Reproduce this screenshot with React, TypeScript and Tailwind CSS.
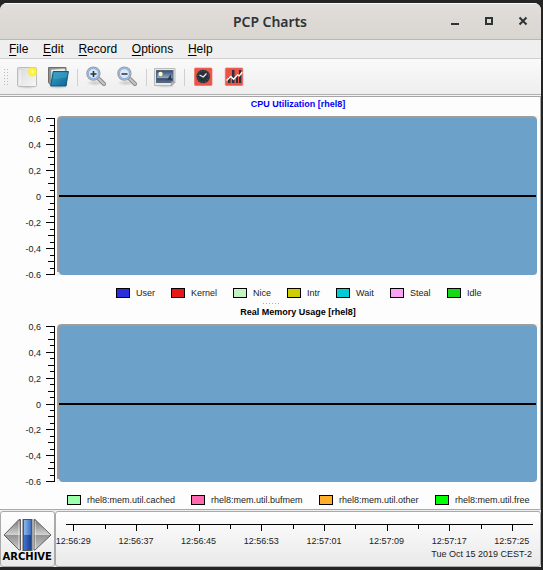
import React from "react";

type Item = { label: string; color: string; width: string };

const cpu: Item[] = [
  { label: "User", color: "bg-[#2d2de0]", width: "w-[55px]" },
  { label: "Kernel", color: "bg-[#e81717]", width: "w-[62px]" },
  { label: "Nice", color: "bg-[#c2f3c2]", width: "w-[54px]" },
  { label: "Intr", color: "bg-[#cdcd00]", width: "w-[49px]" },
  { label: "Wait", color: "bg-[#00cdd1]", width: "w-[54px]" },
  { label: "Steal", color: "bg-[#fba2f5]", width: "w-[57px]" },
  { label: "Idle", color: "bg-[#16d816]", width: "w-[50px]" },
];

const memory: Item[] = [
  { label: "rhel8:mem.util.cached", color: "bg-[#9cffab]", width: "w-[124px]" },
  { label: "rhel8:mem.util.bufmem", color: "bg-[#ff69ad]", width: "w-[128px]" },
  { label: "rhel8:mem.util.other", color: "bg-[#ffae2b]", width: "w-[116px]" },
  { label: "rhel8:mem.util.free", color: "bg-[#00ff00]", width: "w-[100px]" },
];

const yLabels = ["0,6", "0,4", "0,2", "0", "-0,2", "-0,4", "-0.6"];
const times = ["12:56:29", "12:56:37", "12:56:45", "12:56:53", "12:57:01", "12:57:09", "12:57:17", "12:57:25"];
const majorX = [73, 136, 199, 261, 324, 387, 449, 512];
const minorX = [105, 167, 230, 293, 355, 418, 481];

function Plot({ height }: { height: number }) {
  const span = height - 3;
  return (
    <svg width="540" height={height} className="block shrink-0 overflow-visible" shapeRendering="crispEdges">
      {yLabels.map((t, i) => (
        <text key={t} x="41" y={Math.round(6 + (i * span) / 6)} textAnchor="end" fontSize="9" fill="#222">{t}</text>
      ))}
      <rect x="54" y="2" width="1" height={height - 2} fill="#000" />
      {Array.from({ length: 25 }, (_, i) => {
        const len = i % 4 === 0 ? 8 : i % 2 === 0 ? 6 : 4;
        return <rect key={i} x={54 - len} y={Math.round(2 + (i * span) / 24)} width={len} height="1" fill="#000" />;
      })}
      <rect x="57" y="0" width="481" height={height + 1} fill="#f1f1f1" />
      <g shapeRendering="auto">
        <path d={`M57 ${height - 3}V5q0-5 5-5h470q5 0 5 5v${height - 8}z`} fill="#9d9d9d" />
        <path d={`M59 ${height - 4}V6q0-4 4-4h470q4 0 4 4v${height - 10}q0 4-4 4H63q-4 0-4-4z`} fill="#6ca1c9" />
      </g>
      <rect x="537" y="4" width="1" height={height - 4} fill="#fff" />
      <rect x="59" y={height} width="479" height="1" fill="#fff" />
      <rect x="59" y="79" width="477" height="2" fill="#000" />
    </svg>
  );
}

function Legend({ items }: { items: Item[] }) {
  return (
    <div className="flex h-[10px] items-center text-[9px] leading-[10px] text-[#222]">
      {items.map((it) => (
        <div key={it.label} className={"flex shrink-0 items-center gap-[6px] whitespace-nowrap " + it.width}>
          <span className={"h-[10px] w-[14px] shrink-0 border border-black " + it.color} />
          <span>{it.label}</span>
        </div>
      ))}
    </div>
  );
}

function Toolbar() {
  return (
    <svg width="541" height="35" viewBox="0 59 541 35" className="block">
      <defs>
        <linearGradient id="paper" x1="0" y1="0" x2="1" y2="1"><stop stopColor="#d9d9d9" /><stop offset="1" stopColor="#f8f8f8" /></linearGradient>
        <linearGradient id="folder" x1="0" y1="0" x2="1" y2="1"><stop stopColor="#2f9cc2" /><stop offset=".5" stopColor="#2085b2" /><stop offset="1" stopColor="#116291" /></linearGradient>
        <linearGradient id="photo" x1="0" y1="0" x2="0" y2="1"><stop stopColor="#304c79" /><stop offset=".62" stopColor="#96a9bd" /><stop offset=".68" stopColor="#334768" /><stop offset="1" stopColor="#61718c" /></linearGradient>
        <radialGradient id="sun"><stop stopColor="#ffffd5" /><stop offset=".25" stopColor="#fff94c" /><stop offset=".65" stopColor="#faef38" /><stop offset="1" stopColor="#faef38" stopOpacity="0" /></radialGradient>
        <radialGradient id="shade"><stop stopColor="#777" stopOpacity=".35" /><stop offset="1" stopColor="#777" stopOpacity="0" /></radialGradient>
      </defs>
      {[4, 7].map((x) => [69, 72, 75, 78, 81, 84].map((y) => <rect key={x + "-" + y} x={x} y={y} width="1" height="1" fill="#b9b9b9" />))}
      {[77, 146, 184].map((x) => <rect key={x} x={x} y="69" width="1" height="17" fill="#d0d0d0" />)}
      <ellipse cx="27" cy="87" rx="10" ry="2" fill="url(#shade)" />
      <rect x="17.5" y="67.5" width="19" height="19" rx="1.2" fill="url(#paper)" stroke="#bcbcbc" />
      <path d="M20 70v14M20 72h1M20 81h1" stroke="#fff" strokeWidth=".7" />
      <circle cx="32.5" cy="71.8" r="5.5" fill="url(#sun)" />
      <ellipse cx="58" cy="87" rx="11" ry="2" fill="url(#shade)" />
      <path d="M48.5 67.5h17.5v18H51l-2.5-3z" fill="#8d918f" stroke="#6c716f" />
      <path d="M51 69.5 65 68.5l1 8-14.5 7z" fill="#f0f0ee" stroke="#a6a6a6" strokeWidth=".6" />
      <path d="M53.2 71.5h15.2l-2.4 14.5H50.7z" fill="url(#folder)" stroke="#0a5c83" />
      <path d="M54 72.5h13.5l-.8 5-13.4 2z" fill="#6ac2dc" opacity=".25" />
      {[93, 124].map((x) => (
        <g key={x}>
          <ellipse cx={x + 2} cy="83" rx="9" ry="3" fill="url(#shade)" />
          <path d={`M${x + 6} 79l5 5`} stroke="#858585" strokeWidth="4" strokeLinecap="round" />
          <path d={`M${x + 6} 79l5 5`} stroke="#c5c5c3" strokeWidth="2.3" strokeLinecap="round" />
          <circle cx={x + .4} cy="73.6" r="6.6" fill="#a7c6ec" stroke="#999c9f" strokeWidth="1.1" />
          <circle cx={x + .4} cy="73.6" r="5" fill="#dbe8f8" stroke="#86a9da" strokeWidth="1" />
          <path d={`M${x - 2.5} 74h6`} stroke="#253646" strokeWidth="1.6" />
          {x === 93 && <path d="M93.5 71v6" stroke="#253646" strokeWidth="1.6" />}
        </g>
      ))}
      <ellipse cx="165" cy="86" rx="11" ry="2" fill="url(#shade)" />
      <path d="M154.5 68.5h20.5v14l-3 3h-17.5z" fill="#e9e9e5" stroke="#b9b9b6" />
      <rect x="156.5" y="70.5" width="16.5" height="12" fill="url(#photo)" stroke="#526583" />
      <circle cx="160.5" cy="74" r="2.2" fill="#ffffb8" />
      <path d="m170.5 74-3.6 6.5 3-.7 2 .7z" fill="#273c58" />
      <path d="m175 82-4 3.8.5-4.2z" fill="#bbb" stroke="#888" strokeWidth=".5" />
      <rect x="194.5" y="68" width="17.5" height="17.5" rx="1" fill="#eb5345" stroke="#f17063" strokeWidth=".7" />
      <circle cx="203.2" cy="76.5" r="6.8" fill="#26323c" />
      <circle cx="203.2" cy="76.5" r="5.5" fill="none" stroke="#778087" strokeWidth=".7" strokeDasharray=".8 2.08" />
      <path d="m199.5 75 3.8 2 3.2-3.5" fill="none" stroke="#eef1f3" strokeWidth="1.2" />
      <rect x="225.3" y="68" width="17.5" height="17.5" rx="1" fill="#eb5345" stroke="#f17063" strokeWidth=".7" />
      <path d="M228 77h2.5v6H228zM232 70h2.5v13H232zM236 75h2v8h-2zM239 70h2.2v13H239z" fill="#29323c" />
      <path d="m226.5 80.5 4.3-4 2.8 2.8 4-4.3 1.6.9 3-3.7" fill="none" stroke="#fff" strokeWidth="1.4" />
    </svg>
  );
}

function ArchiveIcon() {
  return (
    <svg width="53" height="34" viewBox="1 518 53 34" className="block">
      <defs>
        <linearGradient id="metal" x1="0" y1="0" x2="0" y2="1"><stop stopColor="#777" /><stop offset=".5" stopColor="#d2d2d2" /><stop offset=".52" stopColor="#949494" /><stop offset="1" stopColor="#c8c8c8" /></linearGradient>
        <linearGradient id="bar"><stop stopColor="#8db6ee" /><stop offset="1" stopColor="#3f71bd" /></linearGradient>
        <linearGradient id="low"><stop stopColor="#4373cb" /><stop offset="1" stopColor="#173f91" /></linearGradient>
      </defs>
      <path d="M4 535 19 519.5h1.5v30.5H19zM34 519.5h1L51 535l-16 15h-1z" fill="url(#metal)" stroke="#626262" />
      <path d="M18.8 521v28M35.3 521v28" stroke="#f2f2f2" strokeWidth=".6" />
      <rect x="22.5" y="519" width="10" height="32" fill="#555" />
      <rect x="24" y="520" width="7" height="15" fill="url(#bar)" />
      <rect x="24" y="535" width="7" height="15" fill="url(#low)" />
    </svg>
  );
}

export default function App() {
  return (
    <div className="h-[570px] w-[543px] overflow-hidden bg-[#242424] pt-[3px] font-['Liberation_Sans',Arial,sans-serif] text-black">
      <main className="flex h-[564px] w-[541px] flex-col overflow-hidden rounded-t-[7px] bg-[#fdfdfd]">
        <header className="flex h-[37px] shrink-0 items-center border-t border-b border-t-[#f9f8f6] border-b-[#bfb8ae] bg-linear-to-b from-[#e1dedb] to-[#d9d5d0]">
          <div className="w-[439px] pl-[233px] font-['Noto_Sans','Open_Sans',sans-serif] text-[14px] leading-[20px] font-semibold tracking-[-0.06px] text-[#2e3436]">PCP Charts</div>
          <svg width="102" height="35" viewBox="439 4 102 35">
            <path d="M451 23h8v2h-8z" fill="#2e3436" />
            <path d="M486 18h6v6h-6z" fill="none" stroke="#2e3436" strokeWidth="2" />
            <path d="m519.5 17.5 7 7m0-7-7 7" fill="none" stroke="#2e3436" strokeWidth="2" />
          </svg>
        </header>
        <nav className="flex h-[19px] shrink-0 items-center gap-[14.7px] border-b border-[#d0d0d0] bg-[#efefef] pl-[9px] text-[12px] leading-[18px]">
          {["File", "Edit", "Record", "Options", "Help"].map((m) => (
            <span key={m}><span className="underline decoration-1 underline-offset-[2px]">{m[0]}</span>{m.slice(1)}</span>
          ))}
        </nav>
        <div className="h-[38px] shrink-0 border-b border-[#a5a5a5] bg-[#f5f5f5]">
          <div className="h-[36px] border-b border-[#b0b0b0] bg-linear-to-b from-[#fafafa] to-[#eeeeee]"><Toolbar /></div>
        </div>
        <section className="flex h-[412px] shrink-0 flex-col overflow-hidden border-r border-[#a8a8a8]">
          <h2 className="mt-[1px] h-[18px] pl-[56px] text-center text-[9px] leading-[12px] font-bold text-[#0000ff]">CPU Utilization [rhel8]</h2>
          <Plot height={159} />
          <div className="mt-[13px] pl-[116px]"><Legend items={cpu} /></div>
          <div className="mt-[5px] flex h-px gap-[2px] pl-[263px]">
            {[0, 1, 2, 3, 4, 5].map((d) => <span key={d} className="size-px bg-[#aaa]" />)}
          </div>
          <h2 className="mt-[2px] h-[18px] pl-[56px] text-center text-[9px] leading-[12px] font-bold">Real Memory Usage [rhel8]</h2>
          <Plot height={158} />
          <div className="mt-[13px] pl-[67px]"><Legend items={memory} /></div>
        </section>
        <footer className="flex h-[58px] shrink-0 border-t border-[#aaa] bg-[#ededed] pt-px">
          <div className="flex h-[56px] w-[55px] shrink-0 flex-col rounded-[3px] border border-[#aaa] bg-linear-to-b from-white to-[#e9e9e9] pt-[6px]">
            <ArchiveIcon />
            <div className="pl-[1.5px] font-['DejaVu_Sans',sans-serif] text-[10px] leading-[9px] font-bold">ARCHIVE</div>
          </div>
          <div className="h-[56px] w-[486px] rounded-[3px] border border-[#aaa] bg-linear-to-b from-white to-[#e9e9e9]">
            <svg width="484" height="54" viewBox="56 512 484 54">
              <path d="M66 524h467v1H66z" />
              {majorX.map((x, i) => (
                <g key={x}>
                  <rect x={x} y="525" width="1" height="6" />
                  <text x={73.3 + i * 62.65} y="544" textAnchor="middle" fontSize="9" fill="#222">{times[i]}</text>
                </g>
              ))}
              {minorX.map((x) => <rect key={x} x={x} y="525" width="1" height="4" />)}
              <text x="532" y="557" textAnchor="end" fontSize="9" fill="#222">Tue Oct 15 2019 CEST-2</text>
            </svg>
          </div>
        </footer>
      </main>
    </div>
  );
}
